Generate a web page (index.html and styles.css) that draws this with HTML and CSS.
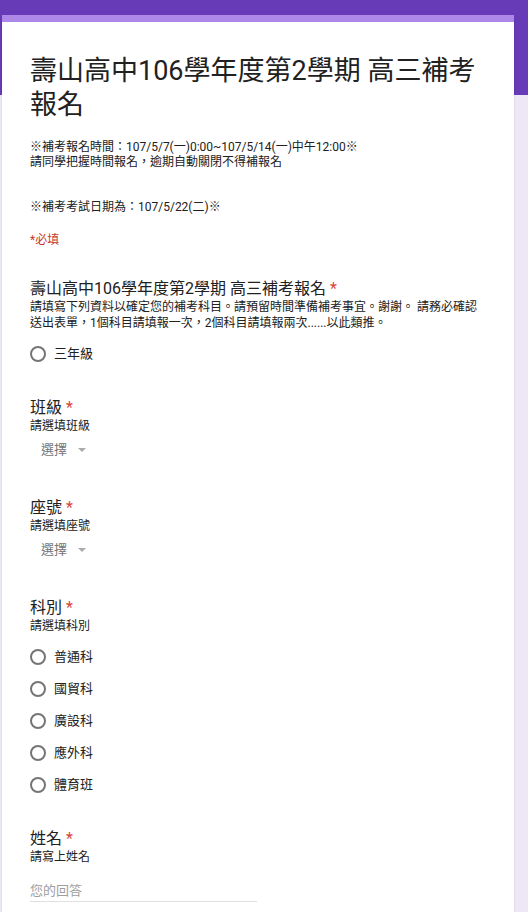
FILE: index.html
```html
<!DOCTYPE html>
<html lang="zh-Hant">
<head>
<meta charset="utf-8">
<title>壽山高中106學年度第2學期 高三補考報名</title>
<link rel="stylesheet" href="styles.css">
</head>
<body>
<main class="card">
  <header class="form-head">
    <h1 class="form-title">壽山高中106學年度第2學期 高三補考報名</h1>
    <p class="form-desc">※補考報名時間：107/5/7(一)0:00~107/5/14(一)中午12:00※<br>請同學把握時間報名，逾期自動關閉不得補報名<br><br><br>※補考考試日期為：107/5/22(二)※</p>
    <p class="required-note">*必填</p>
  </header>

  <section class="question">
    <h2 class="q-title">壽山高中106學年度第2學期 高三補考報名<span class="star">*</span></h2>
    <p class="q-desc">請填寫下列資料以確定您的補考科目。請預留時間準備補考事宜。謝謝。 請務必確認送出表單，1個科目請填報一次，2個科目請填報兩次......以此類推。</p>
    <ul class="options">
      <li class="option"><span class="radio"></span><span class="opt-label">三年級</span></li>
    </ul>
  </section>

  <section class="question">
    <h2 class="q-title">班級<span class="star">*</span></h2>
    <p class="q-desc">請選填班級</p>
    <div class="select"><span class="select-text">選擇</span><span class="caret"></span></div>
  </section>

  <section class="question">
    <h2 class="q-title">座號<span class="star">*</span></h2>
    <p class="q-desc">請選填座號</p>
    <div class="select"><span class="select-text">選擇</span><span class="caret"></span></div>
  </section>

  <section class="question">
    <h2 class="q-title">科別<span class="star">*</span></h2>
    <p class="q-desc">請選填科別</p>
    <ul class="options">
      <li class="option"><span class="radio"></span><span class="opt-label">普通科</span></li>
      <li class="option"><span class="radio"></span><span class="opt-label">國貿科</span></li>
      <li class="option"><span class="radio"></span><span class="opt-label">廣設科</span></li>
      <li class="option"><span class="radio"></span><span class="opt-label">應外科</span></li>
      <li class="option"><span class="radio"></span><span class="opt-label">體育班</span></li>
    </ul>
  </section>

  <section class="question">
    <h2 class="q-title">姓名<span class="star">*</span></h2>
    <p class="q-desc">請寫上姓名</p>
    <div class="text-input"><span class="placeholder">您的回答</span></div>
  </section>
</main>
</body>
</html>
```

FILE: styles.css
```css
html, body {
  margin: 0;
  padding: 0;
}

body {
  background: linear-gradient(#673ab7 0, #673ab7 95px, #ede7f6 95px);
  font-family: Roboto, "Noto Sans CJK TC", sans-serif;
  color: #212121;
  min-height: 912px;
}

.card {
  margin: 15px 0 0 2px;
  width: 512px;
  min-height: 920px;
  background: #fff;
  border-top: 7px solid #ad88e8;
  box-sizing: border-box;
  padding: 32px 28px 0 28px;
  box-shadow: 0 1px 2px rgba(0, 0, 0, 0.12);
}

.form-head {
  margin-bottom: 31px;
}

.form-title {
  margin: 0;
  font-size: 27px;
  line-height: 34px;
  font-weight: 400;
  color: #212121;
}

.form-desc {
  margin: 18px 0 0 0;
  font-size: 12px;
  line-height: 15px;
  color: #212121;
}

.required-note {
  margin: 18px 0 0 0;
  font-size: 12px;
  line-height: 15px;
  color: #c53929;
}

.question {
  margin-bottom: 28px;
}

.q-title {
  margin: 0;
  font-size: 16px;
  line-height: 20px;
  font-weight: 400;
  color: #212121;
}

.star {
  color: #db4437;
  margin-left: 4px;
  font-size: 16px;
}

.q-desc {
  margin: 0;
  font-size: 12px;
  line-height: 16px;
  color: #212121;
}

.options {
  list-style: none;
  margin: 7px 0 0 0;
  padding: 0;
}

.option {
  display: flex;
  align-items: center;
  height: 32px;
}

.radio {
  width: 16px;
  height: 16px;
  box-sizing: border-box;
  border: 2px solid #757575;
  border-radius: 50%;
  margin-right: 8px;
  flex: none;
}

.opt-label {
  font-size: 13px;
  line-height: 20px;
}

.select {
  display: flex;
  align-items: center;
  height: 32px;
  padding: 0 0 4px 11px;
}

.select-text {
  font-size: 13px;
  line-height: 20px;
  color: #757575;
}

.caret {
  width: 0;
  height: 0;
  margin-left: 11px;
  border-left: 4px solid transparent;
  border-right: 4px solid transparent;
  border-top: 4px solid #aaaaaa;
}

.text-input {
  width: 227px;
  margin-top: 15px;
  border-bottom: 1px solid #e0e0e0;
  height: 21px;
}

.placeholder {
  font-size: 13px;
  line-height: 20px;
  color: #9e9e9e;
}
```
